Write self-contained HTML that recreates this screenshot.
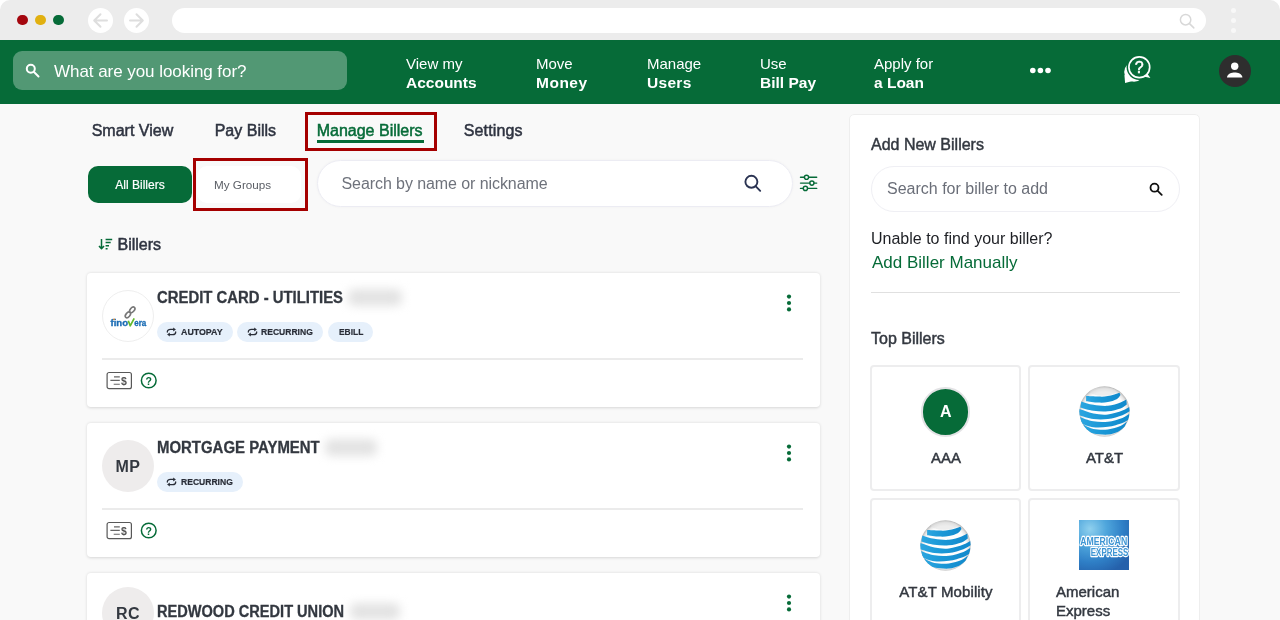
<!DOCTYPE html>
<html><head><meta charset="utf-8">
<style>
*{box-sizing:border-box;margin:0;padding:0}
html,body{width:1280px;height:620px;overflow:hidden;background:#f9f9f9;font-family:"Liberation Sans",sans-serif;}
body{position:relative}
.abs{position:absolute}
svg{will-change:transform}
#chrome{left:0;top:0;width:1280px;height:40px;background:#ececec;border-radius:10px 10px 0 0}
.dot{width:10.5px;height:10.5px;border-radius:50%;top:14.75px}
.navc{width:25px;height:25px;border-radius:50%;background:#fff;top:8px}
#url{left:172px;top:8px;width:1034px;height:25px;border-radius:13px;background:#fff}
#bar{left:0;top:40px;width:1280px;height:64px;background:#066b38}
#gsearch{left:13px;top:51px;width:334px;height:39px;border-radius:9px;background:#529874}
#gsearch span{left:41px;top:10.5px;font-size:17px;letter-spacing:-.05px;color:#fff;white-space:nowrap}
.nav{color:#fff;white-space:nowrap;line-height:19px}
.nav .a{font-size:15px;display:block}
.nav .b{font-size:15.5px;font-weight:bold;display:block;margin-top:.5px}
.tab{top:122px;font-size:16px;color:#2e3340;white-space:nowrap;-webkit-text-stroke:0.5px #2e3340;margin-left:.7px}
.card{background:#fff;border-radius:4px;box-shadow:0 .5px 3px rgba(0,0,0,.14)}
.title{font-size:16px;font-weight:bold;color:#333840;-webkit-text-stroke:.3px #333840;white-space:nowrap;transform-origin:0 50%;transform:scaleX(.93)}
.chip span{display:inline-block;transform-origin:0 50%}
.chip{height:20px;border-radius:10px;background:#e6f0fb;font-size:9.500px;font-weight:bold;color:#2a2e38;line-height:20px;white-space:nowrap;-webkit-text-stroke:.2px #2a2e38}
.hr{height:1.500px;background:#ebebeb}
.blur{background:#e3e3e3;filter:blur(5px);border-radius:6px}
.av{width:52px;height:52px;border-radius:50%;background:#eeecec;color:#333840;font-weight:bold;font-size:16px;text-align:center;line-height:54px;letter-spacing:.4px;text-indent:.4px}
.tb{background:#fff;border:2px solid #ededee;border-radius:4px}
.tbl{font-size:15px;color:#333840;white-space:nowrap;-webkit-text-stroke:0.45px #333840}
</style></head><body><div id="w" style="position:absolute;left:0;top:0;width:1280px;height:620px;overflow:hidden;will-change:transform">
<div class="abs" style="left:0;top:0;width:1280px;height:20px;background:#fff"></div>
<div id="chrome" class="abs"></div>
<div class="abs dot" style="left:17px;background:#a4060e"></div>
<div class="abs dot" style="left:35px;background:#e1b010"></div>
<div class="abs dot" style="left:53px;background:#066b38"></div>
<div class="abs navc" style="left:88px"></div>
<div class="abs navc" style="left:124px"></div>
<svg class="abs" style="left:92px;top:12px" width="17" height="17" viewBox="0 0 17 17" fill="none" stroke="#dedede" stroke-width="2" stroke-linecap="round" stroke-linejoin="round"><path d="M15 8.500H2.500M8.500 2.200l-6.300 6.300 6.300 6.300"/></svg>
<svg class="abs" style="left:128px;top:12px" width="17" height="17" viewBox="0 0 17 17" fill="none" stroke="#dedede" stroke-width="2" stroke-linecap="round" stroke-linejoin="round"><path d="M2 8.500h12.500M8.500 2.200l6.300 6.300-6.300 6.300"/></svg>
<div id="url" class="abs"></div>
<svg class="abs" style="left:1177px;top:11px" width="20" height="20" viewBox="0 0 20 20" fill="none" stroke="#d8d8d8" stroke-width="1.500" stroke-linecap="round"><circle cx="8.600" cy="8.700" r="5.200"/><path d="M12.500 12.600l4.300 4.300"/></svg>
<div class="abs" style="left:1231px;top:8px;width:5px;height:5px;border-radius:50%;background:#f8f8f8"></div>
<div class="abs" style="left:1231px;top:18px;width:5px;height:5px;border-radius:50%;background:#f8f8f8"></div>
<div class="abs" style="left:1231px;top:28px;width:5px;height:5px;border-radius:50%;background:#f8f8f8"></div>

<div id="bar" class="abs"></div>
<div id="gsearch" class="abs">
<svg class="abs" style="left:12px;top:12px" width="15" height="15" viewBox="0 0 15 15" fill="none" stroke="#fff" stroke-width="2" stroke-linecap="round"><circle cx="5.8" cy="5.8" r="4"/><path d="M9 9l4.5 4.5"/></svg>
<span class="abs">What are you looking for?</span></div>
<div class="abs nav" style="left:406px;top:53.5px"><span class="a">View my</span><span class="b">Accounts</span></div>
<div class="abs nav" style="left:536px;top:53.5px"><span class="a">Move</span><span class="b" style="letter-spacing:.5px">Money</span></div>
<div class="abs nav" style="left:647px;top:53.5px"><span class="a">Manage</span><span class="b" style="letter-spacing:.3px">Users</span></div>
<div class="abs nav" style="left:760px;top:53.5px"><span class="a">Use</span><span class="b">Bill Pay</span></div>
<div class="abs nav" style="left:874px;top:53.5px"><span class="a">Apply for</span><span class="b">a Loan</span></div>
<svg class="abs" style="left:1029px;top:66px" width="24" height="10" viewBox="0 0 24 10" fill="#fff"><circle cx="3.800" cy="4.500" r="2.800"/><circle cx="11.400" cy="4.500" r="2.800"/><circle cx="19" cy="4.500" r="2.800"/></svg>
<div class="abs" style="left:1219px;top:54.5px;width:32px;height:32px;border-radius:50%;background:#2e2e2e"></div>
<svg class="abs" style="left:1218px;top:54px" width="33" height="33" viewBox="0 0 33 33" fill="#fff"><circle cx="16.700" cy="12.300" r="3.700"/><path d="M9 23.500c0-3.700 5-5 7.700-5s7.700 1.300 7.700 5z"/></svg>

<!-- help icon -->
<svg class="abs" style="left:1115px;top:48px" width="45" height="45" viewBox="0 0 45 45"><circle cx="19" cy="24" r="9.800" fill="#fff"/><path d="M9.400 27l.7 8 7.500-2z" fill="#fff"/><circle cx="24.300" cy="19.200" r="12.700" fill="#066b38"/><path d="M31.300 24.300L35.400 30 27.500 28.300Z" fill="#fff"/><circle cx="24.300" cy="19.200" r="10.400" fill="#066b38" stroke="#fff" stroke-width="1.700"/><text x="24.300" y="25" font-family="Liberation Sans" font-size="16" fill="#fff" stroke="#fff" stroke-width=".5" text-anchor="middle">?</text></svg>

<!-- tabs -->
<div class="abs tab" style="left:91px">Smart View</div>
<div class="abs tab" style="left:214px">Pay Bills</div>
<div class="abs tab" style="left:316px;color:#066b38;-webkit-text-stroke:0.5px #066b38">Manage Billers</div>
<div class="abs" style="left:317px;top:140px;width:106.5px;height:2.5px;background:#066b38"></div>
<div class="abs tab" style="left:463px;letter-spacing:.15px">Settings</div>
<div class="abs" style="left:305px;top:112px;width:132px;height:38.700px;border:3px solid #a50000"></div>

<!-- buttons -->
<div class="abs" style="left:88px;top:166px;width:104px;height:37px;border-radius:10px;background:#066b38;color:#fff;font-size:12px;text-align:center;line-height:38px;-webkit-text-stroke:0.2px #fff">All Billers</div>
<div class="abs" style="left:197px;top:166px;width:104px;height:37px;border-radius:10px;background:#fff"></div>
<div class="abs" style="left:214px;top:166px;font-size:11.700px;color:#5b5f66;line-height:38px">My Groups</div>
<div class="abs" style="left:193px;top:158px;width:115px;height:52.700px;border:3px solid #a50000"></div>

<!-- search -->
<div class="abs" style="left:316.600px;top:159.700px;width:476px;height:47.300px;border-radius:24px;background:#fff;border:1.500px solid #ececf3;box-shadow:0 0 3px rgba(0,0,0,.04)"></div>
<div class="abs" style="left:341.500px;top:175px;font-size:16px;letter-spacing:-.08px;color:#6e727b;white-space:nowrap">Search by name or nickname</div>
<svg class="abs" style="left:743px;top:173px" width="20" height="20" viewBox="0 0 20 20" fill="none" stroke="#2a3352" stroke-width="1.900" stroke-linecap="round"><circle cx="8.400" cy="8.800" r="6"/><path d="M12.800 13.400l4.400 4.400"/></svg>
<svg class="abs" style="left:799px;top:173px" width="20" height="20" viewBox="0 0 20 20" fill="none" stroke="#066b38" stroke-width="1.400" stroke-linecap="round"><path d="M1.500 4.300h4M9.700 4.300h8M1.500 10.100h9.200M15 10.100h2.700M1.500 15.400h2.800M8.600 15.400h9.100"/><circle cx="7.500" cy="4.300" r="2.100"/><circle cx="12.900" cy="10.100" r="2.100"/><circle cx="6.400" cy="15.400" r="2.100"/></svg>

<!-- billers heading -->
<svg class="abs" style="left:97px;top:237px" width="17" height="14" viewBox="0 0 17 14" fill="none" stroke="#066b38" stroke-width="1.500" stroke-linejoin="round"><path d="M4.500 2v9.500M2 9l2.500 2.800L7 9M8.600 2.600h6.600M8.600 5.600h5.100M8.600 8.700h3.400M8.600 11.700h2"/></svg>
<div class="abs" style="left:117.500px;top:236px;font-size:16px;color:#2e3340;-webkit-text-stroke:0.5px #2e3340">Billers</div>

<!-- card 1 -->
<div class="abs card" style="left:87px;top:273px;width:733px;height:134px"></div>
<div class="abs" style="left:101.700px;top:290px;width:52px;height:52px;border-radius:50%;background:#fff;border:1.500px solid #eeeeee"></div>
<svg class="abs" style="left:106px;top:303px" width="42" height="26" viewBox="0 0 42 26"><g fill="none" stroke="#777" stroke-width="1.600"><ellipse cx="21.900" cy="11.900" rx="3.300" ry="2" transform="rotate(-50 21.900 11.900)"/><ellipse cx="26.300" cy="6.800" rx="3.300" ry="2" transform="rotate(-50 26.300 6.800)"/></g><g font-family="Liberation Sans" font-weight="bold" font-size="9.500" fill="#1a6cb4" stroke="#1a6cb4" stroke-width=".35"><text x="4.500" y="22.800" textLength="17.500" lengthAdjust="spacingAndGlyphs">fino</text><text x="28.300" y="22.800" textLength="12" lengthAdjust="spacingAndGlyphs">era</text></g><path d="M22.300 17.800l1.900 5 4-7.400" fill="none" stroke="#62b92c" stroke-width="1.700" stroke-linejoin="round"/><circle cx="8" cy="16.400" r=".8" fill="#f08a24"/></svg>
<div class="abs title" style="left:157px;top:289px">CREDIT CARD - UTILITIES</div>
<div class="abs blur" style="left:348px;top:289px;width:54px;height:17px"></div>
<div class="abs chip" style="left:157px;top:322px;width:76px;padding-left:23.700px"><span style="transform:scaleX(.93)">AUTOPAY</span></div>
<div class="abs chip" style="left:237px;top:322px;width:86px;padding-left:23.700px"><span style="transform:scaleX(.9)">RECURRING</span></div>
<div class="abs chip" style="left:328px;top:322px;width:45px;padding-left:10.700px"><span style="transform:scaleX(.886)">EBILL</span></div>
<div class="abs hr" style="left:102px;top:358px;width:701px"></div>

<!-- card 2 -->
<div class="abs card" style="left:87px;top:423px;width:733px;height:134px"></div>
<div class="abs av" style="left:101.700px;top:440px">MP</div>
<div class="abs title" style="left:157px;top:439px;transform:scaleX(.934)">MORTGAGE PAYMENT</div>
<div class="abs blur" style="left:325px;top:439px;width:52px;height:17px"></div>
<div class="abs chip" style="left:157px;top:472px;width:86px;padding-left:23.700px"><span style="transform:scaleX(.9)">RECURRING</span></div>
<div class="abs hr" style="left:102px;top:508px;width:701px"></div>

<!-- card 3 -->
<div class="abs card" style="left:87px;top:573px;width:733px;height:134px"></div>
<div class="abs av" style="left:101.700px;top:587px">RC</div>
<div class="abs title" style="left:157px;top:603px;transform:scaleX(.911)">REDWOOD CREDIT UNION</div>
<div class="abs blur" style="left:350px;top:603px;width:50px;height:17px"></div>

<!-- right panel -->
<div class="abs" style="left:849.400px;top:113.800px;width:350.500px;height:520px;background:#fff;border:1.600px solid #eeeeee;border-radius:5px"></div>
<div class="abs tbl" style="left:871px;top:136px;font-size:16px">Add New Billers</div>
<div class="abs" style="left:871px;top:166px;width:309px;height:46px;border-radius:23px;background:#fff;border:1.500px solid #efeff4"></div>
<div class="abs" style="left:887px;top:180px;font-size:16px;color:#6a6e78;white-space:nowrap">Search for biller to add</div>
<svg class="abs" style="left:1149px;top:182px" width="14" height="14" viewBox="0 0 14 14" fill="none" stroke="#111" stroke-width="1.800" stroke-linecap="round"><circle cx="5.500" cy="5.700" r="4"/><path d="M8.700 8.900l4 4"/></svg>
<div class="abs" style="left:871px;top:230px;font-size:16px;color:#1d1f24;white-space:nowrap">Unable to find your biller?</div>
<div class="abs" style="left:872px;top:253px;font-size:17px;color:#066b38;white-space:nowrap">Add Biller Manually</div>
<div class="abs" style="left:871px;top:292px;width:309px;height:1px;background:#e0e0e0"></div>
<div class="abs tbl" style="left:871px;top:330px;font-size:16px">Top Billers</div>

<div class="abs tb" style="left:870px;top:364.500px;width:151px;height:126.400px"></div>
<div class="abs tb" style="left:1028.200px;top:364.500px;width:151.500px;height:126.400px"></div>
<div class="abs tb" style="left:870px;top:497.700px;width:151px;height:140px"></div>
<div class="abs tb" style="left:1028.200px;top:497.700px;width:151.500px;height:140px"></div>
<div class="abs" style="left:920.500px;top:387px;width:49.500px;height:49.500px;border-radius:50%;background:#066b38;border:2.500px solid #e3e3e5;color:#fff;font-weight:bold;font-size:16px;text-align:center;line-height:44.500px;padding-top:1.300px;text-indent:1px">A</div>
<div class="abs tbl" style="left:871px;top:449px;width:150px;text-align:center">AAA</div>
<div class="abs tbl" style="left:1029px;top:449px;width:151px;text-align:center">AT&amp;T</div>
<div class="abs tbl" style="left:871px;top:583px;width:150px;text-align:center;letter-spacing:.1px">AT&amp;T Mobility</div>
<div class="abs tbl" style="left:1056px;top:582px;line-height:19px;white-space:normal;width:90px">American Express</div>
<svg class="abs" style="left:166px;top:327px" width="11" height="10" viewBox="0 0 11 10"><g fill="none" stroke="#2a2e38" stroke-width="1.300" stroke-linecap="round"><path d="M1.300 5.100C1.300 3.200 2.800 2.400 4.400 2.400H7.600"/><path d="M9.700 4.900C9.700 6.800 8.200 7.600 6.600 7.600H3.400"/></g><path d="M7.200 .4L9.900 2.400 7.200 4.400ZM3.800 5.600L1.100 7.600 3.800 9.600Z" fill="#2a2e38"/></svg><svg class="abs" style="left:247px;top:327px" width="11" height="10" viewBox="0 0 11 10"><g fill="none" stroke="#2a2e38" stroke-width="1.300" stroke-linecap="round"><path d="M1.300 5.100C1.300 3.200 2.800 2.400 4.400 2.400H7.600"/><path d="M9.700 4.900C9.700 6.800 8.200 7.600 6.600 7.600H3.400"/></g><path d="M7.200 .4L9.900 2.400 7.200 4.400ZM3.800 5.600L1.100 7.600 3.800 9.600Z" fill="#2a2e38"/></svg><svg class="abs" style="left:166px;top:477px" width="11" height="10" viewBox="0 0 11 10"><g fill="none" stroke="#2a2e38" stroke-width="1.300" stroke-linecap="round"><path d="M1.300 5.100C1.300 3.200 2.800 2.400 4.400 2.400H7.600"/><path d="M9.700 4.900C9.700 6.800 8.200 7.600 6.600 7.600H3.400"/></g><path d="M7.200 .4L9.900 2.400 7.200 4.400ZM3.800 5.600L1.100 7.600 3.800 9.600Z" fill="#2a2e38"/></svg><svg class="abs" style="left:106px;top:371px" width="27" height="19" viewBox="0 0 27 19"><rect x="1.100" y="1.500" width="24.300" height="16.200" rx="2" fill="#fff" stroke="#585858" stroke-width="1.200"/><path d="M8 5.900H13.800M4.400 9.400H13.800M7.700 13.200H13.800" stroke="#666" stroke-width="1.100" fill="none"/><text x="18" y="13.600" font-family="Liberation Sans" font-weight="bold" font-size="10.500" fill="#555" text-anchor="middle">$</text></svg><svg class="abs" style="left:106px;top:521px" width="27" height="19" viewBox="0 0 27 19"><rect x="1.100" y="1.500" width="24.300" height="16.200" rx="2" fill="#fff" stroke="#585858" stroke-width="1.200"/><path d="M8 5.900H13.800M4.400 9.400H13.800M7.700 13.200H13.800" stroke="#666" stroke-width="1.100" fill="none"/><text x="18" y="13.600" font-family="Liberation Sans" font-weight="bold" font-size="10.500" fill="#555" text-anchor="middle">$</text></svg><svg class="abs" style="left:139.5px;top:371px" width="18" height="19" viewBox="0 0 18 19"><circle cx="8.750" cy="9.500" r="7.350" fill="#fff" stroke="#066b38" stroke-width="1.500"/><text x="8.750" y="13.500" font-family="Liberation Sans" font-weight="bold" font-size="10.500" fill="#066b38" text-anchor="middle">?</text></svg><svg class="abs" style="left:139.5px;top:521px" width="18" height="19" viewBox="0 0 18 19"><circle cx="8.750" cy="9.500" r="7.350" fill="#fff" stroke="#066b38" stroke-width="1.500"/><text x="8.750" y="13.500" font-family="Liberation Sans" font-weight="bold" font-size="10.500" fill="#066b38" text-anchor="middle">?</text></svg><svg class="abs" style="left:785.5px;top:294px" width="6" height="18" viewBox="0 0 6 18" fill="#066b38"><circle cx="3" cy="2.600" r="2.100"/><circle cx="3" cy="9" r="2.100"/><circle cx="3" cy="15.400" r="2.100"/></svg><svg class="abs" style="left:785.5px;top:444px" width="6" height="18" viewBox="0 0 6 18" fill="#066b38"><circle cx="3" cy="2.600" r="2.100"/><circle cx="3" cy="9" r="2.100"/><circle cx="3" cy="15.400" r="2.100"/></svg><svg class="abs" style="left:785.5px;top:594px" width="6" height="18" viewBox="0 0 6 18" fill="#066b38"><circle cx="3" cy="2.600" r="2.100"/><circle cx="3" cy="9" r="2.100"/><circle cx="3" cy="15.400" r="2.100"/></svg><svg class="abs" style="left:1079px;top:386px" width="51" height="51" viewBox="0 0 51 51"><defs><radialGradient id="g1" cx="50%" cy="51%" r="50%"><stop offset="0" stop-color="#fff"/><stop offset=".8" stop-color="#fcfcfc"/><stop offset=".92" stop-color="#e6e6e6"/><stop offset="1" stop-color="#bdbdbd"/></radialGradient><linearGradient id="b1" x1="0" y1="0" x2="1" y2="0"><stop offset="0" stop-color="#2ca6e0"/><stop offset=".45" stop-color="#1a97d6"/><stop offset="1" stop-color="#1189cc"/></linearGradient><clipPath id="c1"><circle cx="25.500" cy="25.500" r="25.200"/></clipPath></defs><circle cx="25.500" cy="25.500" r="25.200" fill="url(#g1)"/><ellipse cx="24" cy="5.500" rx="13" ry="4.200" fill="#e0e0e0" opacity=".55"/><g clip-path="url(#c1)" fill="url(#b1)"><path d="M7.1 10.1C9.1 10.2 15.6 10.6 19.2 10.6C22.8 10.6 25.3 10.8 28.9 10.1C32.4 9.4 38.6 7.3 40.5 6.7L41.5 9.0C40.9 9.7 39.7 12.0 37.6 13.2C35.5 14.4 32.0 15.5 28.9 16.1C25.8 16.7 22.8 16.8 19.2 16.6C15.6 16.5 9.1 15.4 7.1 15.2Z"/><path d="M2.3 15.4C4.3 16.0 10.0 18.1 14.4 18.8C18.8 19.5 24.4 20.2 28.9 19.8C33.4 19.4 38.4 17.5 41.5 16.4C44.6 15.4 46.3 14.0 47.3 13.5L47.8 18.5C46.8 19.1 44.6 21.3 41.5 22.4C38.4 23.5 33.4 24.9 28.9 25.3C24.4 25.7 19.0 25.4 14.4 24.8C9.8 24.2 3.5 22.1 1.3 21.5Z"/><path d="M0.0 22.7C2.4 23.5 9.6 26.5 14.4 27.5C19.2 28.5 24.1 29.0 28.9 28.5C33.7 28.0 39.7 26.0 43.4 24.6C47.1 23.2 49.7 21.1 51.0 20.4L51.0 25.1C49.7 25.8 47.1 27.9 43.4 29.2C39.7 30.5 33.7 32.4 28.9 33.1C24.1 33.7 19.2 33.7 14.4 33.1C9.6 32.4 2.4 29.8 0.0 29.2Z"/><path d="M0.5 30.9C2.8 31.6 9.7 34.5 14.4 35.3C19.1 36.1 24.1 36.3 28.9 35.7C33.7 35.1 39.8 33.2 43.4 31.9C47.0 30.6 49.3 28.5 50.5 27.8L49.5 33.8C48.5 34.3 46.8 35.7 43.4 36.9C40.0 38.1 33.7 40.1 28.9 40.8C24.1 41.5 18.9 41.9 14.4 41.3C9.9 40.7 4.1 38.0 2.0 37.4Z"/><path d="M4.0 38.6C5.7 39.3 10.2 42.2 14.4 43.0C18.6 43.8 24.4 44.0 28.9 43.5C33.4 43.0 38.3 41.4 41.5 40.1C44.7 38.8 46.9 36.4 48.0 35.6L45.5 41.1C44.4 41.9 41.4 44.8 38.6 46.1C35.8 47.3 32.9 48.3 28.9 48.6C24.9 48.8 18.0 48.3 14.4 47.6C10.8 46.9 8.5 44.8 7.3 44.2Z"/></g></svg><svg class="abs" style="left:920px;top:520px" width="51" height="51" viewBox="0 0 51 51"><defs><radialGradient id="g2" cx="50%" cy="51%" r="50%"><stop offset="0" stop-color="#fff"/><stop offset=".8" stop-color="#fcfcfc"/><stop offset=".92" stop-color="#e6e6e6"/><stop offset="1" stop-color="#bdbdbd"/></radialGradient><linearGradient id="b2" x1="0" y1="0" x2="1" y2="0"><stop offset="0" stop-color="#2ca6e0"/><stop offset=".45" stop-color="#1a97d6"/><stop offset="1" stop-color="#1189cc"/></linearGradient><clipPath id="c2"><circle cx="25.500" cy="25.500" r="25.200"/></clipPath></defs><circle cx="25.500" cy="25.500" r="25.200" fill="url(#g2)"/><ellipse cx="24" cy="5.500" rx="13" ry="4.200" fill="#e0e0e0" opacity=".55"/><g clip-path="url(#c2)" fill="url(#b2)"><path d="M7.1 10.1C9.1 10.2 15.6 10.6 19.2 10.6C22.8 10.6 25.3 10.8 28.9 10.1C32.4 9.4 38.6 7.3 40.5 6.7L41.5 9.0C40.9 9.7 39.7 12.0 37.6 13.2C35.5 14.4 32.0 15.5 28.9 16.1C25.8 16.7 22.8 16.8 19.2 16.6C15.6 16.5 9.1 15.4 7.1 15.2Z"/><path d="M2.3 15.4C4.3 16.0 10.0 18.1 14.4 18.8C18.8 19.5 24.4 20.2 28.9 19.8C33.4 19.4 38.4 17.5 41.5 16.4C44.6 15.4 46.3 14.0 47.3 13.5L47.8 18.5C46.8 19.1 44.6 21.3 41.5 22.4C38.4 23.5 33.4 24.9 28.9 25.3C24.4 25.7 19.0 25.4 14.4 24.8C9.8 24.2 3.5 22.1 1.3 21.5Z"/><path d="M0.0 22.7C2.4 23.5 9.6 26.5 14.4 27.5C19.2 28.5 24.1 29.0 28.9 28.5C33.7 28.0 39.7 26.0 43.4 24.6C47.1 23.2 49.7 21.1 51.0 20.4L51.0 25.1C49.7 25.8 47.1 27.9 43.4 29.2C39.7 30.5 33.7 32.4 28.9 33.1C24.1 33.7 19.2 33.7 14.4 33.1C9.6 32.4 2.4 29.8 0.0 29.2Z"/><path d="M0.5 30.9C2.8 31.6 9.7 34.5 14.4 35.3C19.1 36.1 24.1 36.3 28.9 35.7C33.7 35.1 39.8 33.2 43.4 31.9C47.0 30.6 49.3 28.5 50.5 27.8L49.5 33.8C48.5 34.3 46.8 35.7 43.4 36.9C40.0 38.1 33.7 40.1 28.9 40.8C24.1 41.5 18.9 41.9 14.4 41.3C9.9 40.7 4.1 38.0 2.0 37.4Z"/><path d="M4.0 38.6C5.7 39.3 10.2 42.2 14.4 43.0C18.6 43.8 24.4 44.0 28.9 43.5C33.4 43.0 38.3 41.4 41.5 40.1C44.7 38.8 46.9 36.4 48.0 35.6L45.5 41.1C44.4 41.9 41.4 44.8 38.6 46.1C35.8 47.3 32.9 48.3 28.9 48.6C24.9 48.8 18.0 48.3 14.4 47.6C10.8 46.9 8.5 44.8 7.3 44.2Z"/></g></svg><svg class="abs" style="left:1079px;top:520px" width="50" height="50" viewBox="0 0 50 50"><defs><radialGradient id="ax" cx="22%" cy="18%" r="95%"><stop offset="0" stop-color="#8fd0ee"/><stop offset=".35" stop-color="#4fa6dc"/><stop offset=".7" stop-color="#2f7fc6"/><stop offset="1" stop-color="#2561ab"/></radialGradient></defs><rect width="50" height="50" fill="url(#ax)"/><g font-family="Liberation Sans" font-weight="bold" font-size="10.500" fill="#3d95d3" stroke="#fff" stroke-width="2.400" paint-order="stroke" stroke-linejoin="round"><text x="1.200" y="24.800" textLength="47" lengthAdjust="spacingAndGlyphs">AMERICAN</text><text x="11.800" y="35.500" textLength="37.500" lengthAdjust="spacingAndGlyphs">EXPRESS</text></g></svg>
</div></body></html>
